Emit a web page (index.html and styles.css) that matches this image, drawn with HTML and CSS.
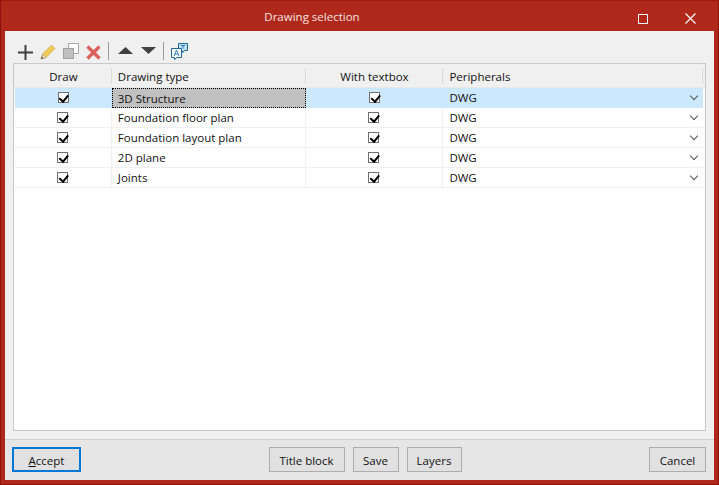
FILE: index.html
```html
<!DOCTYPE html>
<html lang="en">
<head>
<meta charset="utf-8">
<title>Drawing selection</title>
<link rel="stylesheet" href="styles.css">
</head>
<body>
<div class="window">
  <header class="titlebar">
    <span class="title">Drawing selection</span>
    <svg class="win-max" width="10" height="10" viewBox="0 0 10 10"><rect x="0.5" y="0.5" width="9" height="9" fill="none" stroke="#fff"/></svg>
    <svg class="win-close" width="11" height="11" viewBox="0 0 11 11"><path d="M0.5 0.5L10.5 10.5M10.5 0.5L0.5 10.5" stroke="#fff" stroke-width="1.2" fill="none"/></svg>
  </header>
  <main class="content">
    <div class="toolbar">
      <svg class="tool t-plus" width="15" height="15" viewBox="0 0 15 15"><path d="M7.5 0V15M0 7.5H15" stroke="#404040" stroke-width="2" fill="none"/></svg>
      <svg class="tool t-pencil" width="16" height="16" viewBox="0 0 16 16"><path d="M1 15L2.5 10L11.5 1.2L15 4.5L6 13.5Z" fill="#f2cb55" stroke="#c9a94a" stroke-width="0.8"/><path d="M1 15L2.5 10L6 13.5Z" fill="#e8dcc0" stroke="#a89a80" stroke-width="0.6"/><path d="M1 15L1.8 12.6L3.4 14.2Z" fill="#444"/></svg>
      <svg class="tool t-copy" width="16" height="16" viewBox="0 0 16 16"><rect x="5.5" y="0.5" width="10" height="10" fill="#fff" stroke="#a8a8a8"/><rect x="0.5" y="5.5" width="10" height="10" fill="#c0c0c0" stroke="#a0a0a0"/></svg>
      <svg class="tool t-del" width="15" height="15" viewBox="0 0 15 15"><path d="M1.5 1.5L13.5 13.5M13.5 1.5L1.5 13.5" stroke="#d9605c" stroke-width="3.2" fill="none"/></svg>
      <span class="sep"></span>
      <svg class="tool t-up" width="15" height="7" viewBox="0 0 15 7"><path d="M7.5 0L15 7H0Z" fill="#404040"/></svg>
      <svg class="tool t-down" width="15" height="7" viewBox="0 0 15 7"><path d="M0 0H15L7.5 7Z" fill="#404040"/></svg>
      <span class="sep"></span>
      <svg class="tool t-lang" width="17" height="17" viewBox="0 0 17 17"><path d="M7.5 0.5H16.5V7.5H13.5L12 9.5L11 7.5H7.5Z" fill="#bcdcf2" stroke="#1f6796"/><path d="M10 2.5H14M12 2.5L12 5.5" stroke="#2f80c0" fill="none"/><path d="M0.5 5.5H10.5V14.5H6L3.5 16.5V14.5H0.5Z" fill="#fff" stroke="#1f6796"/><path d="M3 13L5.5 7L8 13M3.9 11H7.1" stroke="#2f80c0" fill="none"/></svg>
    </div>
    <div class="panel">
      <div class="row head">
        <div class="cell c1 center">Draw</div>
        <div class="cell c2">Drawing type</div>
        <div class="cell c3 center">With textbox</div>
        <div class="cell c4">Peripherals</div>
      </div>
      <div class="row selected">
        <div class="cell c1 center"><span class="check"></span></div>
        <div class="cell c2"><span class="focus">3D Structure</span></div>
        <div class="cell c3 center"><span class="check"></span></div>
        <div class="cell c4">DWG<span class="chev"></span></div>
      </div>
      <div class="row">
        <div class="cell c1 center"><span class="check"></span></div>
        <div class="cell c2">Foundation floor plan</div>
        <div class="cell c3 center"><span class="check"></span></div>
        <div class="cell c4">DWG<span class="chev"></span></div>
      </div>
      <div class="row">
        <div class="cell c1 center"><span class="check"></span></div>
        <div class="cell c2">Foundation layout plan</div>
        <div class="cell c3 center"><span class="check"></span></div>
        <div class="cell c4">DWG<span class="chev"></span></div>
      </div>
      <div class="row">
        <div class="cell c1 center"><span class="check"></span></div>
        <div class="cell c2">2D plane</div>
        <div class="cell c3 center"><span class="check"></span></div>
        <div class="cell c4">DWG<span class="chev"></span></div>
      </div>
      <div class="row">
        <div class="cell c1 center"><span class="check"></span></div>
        <div class="cell c2">Joints</div>
        <div class="cell c3 center"><span class="check"></span></div>
        <div class="cell c4">DWG<span class="chev"></span></div>
      </div>
    </div>
  </main>
  <footer class="footer">
    <button class="btn primary"><u>A</u>ccept</button>
    <div class="mid">
      <button class="btn title-block">Title block</button>
      <button class="btn save">Save</button>
      <button class="btn layers">Layers</button>
    </div>
    <button class="btn cancel">Cancel</button>
  </footer>
</div>
</body>
</html>
```
FILE: styles.css
```css
* { box-sizing: border-box; }
html, body { margin: 0; padding: 0; }
body { width: 719px; height: 485px; overflow: hidden; font: 11.5px "Open Sans", "Noto Sans", sans-serif; color: #111; }
.window { width: 719px; height: 485px; display: flex; flex-direction: column; background: #b0281c; border: 1px solid #8f1208; border-top-color: #a0180e; padding: 0 4px 4px; }
.titlebar { height: 30px; flex: none; display: flex; align-items: center; position: relative; color: #fff; }
.title { position: absolute; left: 0; width: 614px; text-align: center; color: #f4e4e2; }
.win-max { position: absolute; left: 633px; top: 13px; }
.win-close { position: absolute; left: 680px; top: 12px; }
.content { flex: 1; background: #f0f0f0; padding: 0 8px 8px 8px; display: flex; flex-direction: column; min-height: 0; border-bottom: 1px solid #d0d0d0; }
.toolbar { height: 32px; flex: none; display: flex; align-items: center; padding: 10px 0 0 5px; }
.tool { flex: none; }
.t-plus { margin-right: 7px; }
.t-pencil { margin-right: 7px; }
.t-copy { margin-right: 7px; margin-top: -2px; }
.t-del { margin-right: 7px; }
.t-up { margin-right: 8px; margin-top: -4px; }
.t-down { margin-right: 7px; margin-top: -4px; }
.sep { width: 1px; height: 18px; background: #9a9a9a; margin-right: 9px; margin-top: -2px; flex: none; }
.sep + .t-lang { margin-left: -2px; margin-top: -2px; }
.panel { flex: 1; background: #fff; border: 1px solid #c8c8c8; min-height: 0; padding: 0 2px 0 1px; }
.row { display: flex; height: 20px; border-bottom: 1px solid #f0f0f0; }
.row.head { height: 24px; background: #f0f0f0; border-bottom: 1px solid #e8e8e8; margin: 0 -2px 0 -1px; padding: 0 2px 0 1px; }
.row.selected { background: #cce8ff; border-bottom-color: #cce8ff; }
.cell { display: flex; align-items: center; position: relative; padding-left: 6px; white-space: nowrap; }
.center { justify-content: center; padding-left: 0; }
.c1 { width: 97px; }
.c2 { width: 194px; }
.c3 { width: 138px; }
.c4 { width: 260px; }
.head .cell { padding-top: 1px; }
.head .cell::after { content: ""; position: absolute; right: 0; top: 4px; height: 16px; width: 1px; background: #dcdcdc; }
.row:not(.head) .c1, .row:not(.head) .c2, .row:not(.head) .c3 { border-right: 1px solid #f0f0f0; }
.selected .cell { border-right: none !important; }
.row.selected .c2 { padding-left: 0; align-items: flex-start; }
.focus { display: flex; align-items: center; width: 194px; height: 20px; padding-left: 6px; background: #c0c0c0; outline: 1px dotted #000; outline-offset: -1px; }
.check { width: 11px; height: 11px; border: 1px solid #707070; background: #fff; position: relative; display: block; }
.check::after { content: ""; position: absolute; left: 2.5px; top: 0; width: 3.5px; height: 6.5px; border: solid #000; border-width: 0 2px 2px 0; transform: rotate(40deg); }
.chev { position: absolute; right: 6px; top: 5px; width: 6px; height: 6px; border: solid #555; border-width: 0 1px 1px 0; transform: rotate(45deg); }
.footer { height: 40px; flex: none; background: #e6e6e6; display: flex; align-items: flex-start; padding: 7px 8px 0 7px; position: relative; }
.mid { flex: 1; display: flex; gap: 8px; justify-content: center; }
.btn { height: 25px; font: inherit; color: #111; background: #e1e1e1; border: 1px solid #adadad; padding: 1px 0 0; }
.primary { width: 69px; border: 2px solid #0078d7; }
.title-block { width: 76px; }
.save { width: 46px; }
.layers { width: 55px; }
.cancel { width: 57px; }
```
